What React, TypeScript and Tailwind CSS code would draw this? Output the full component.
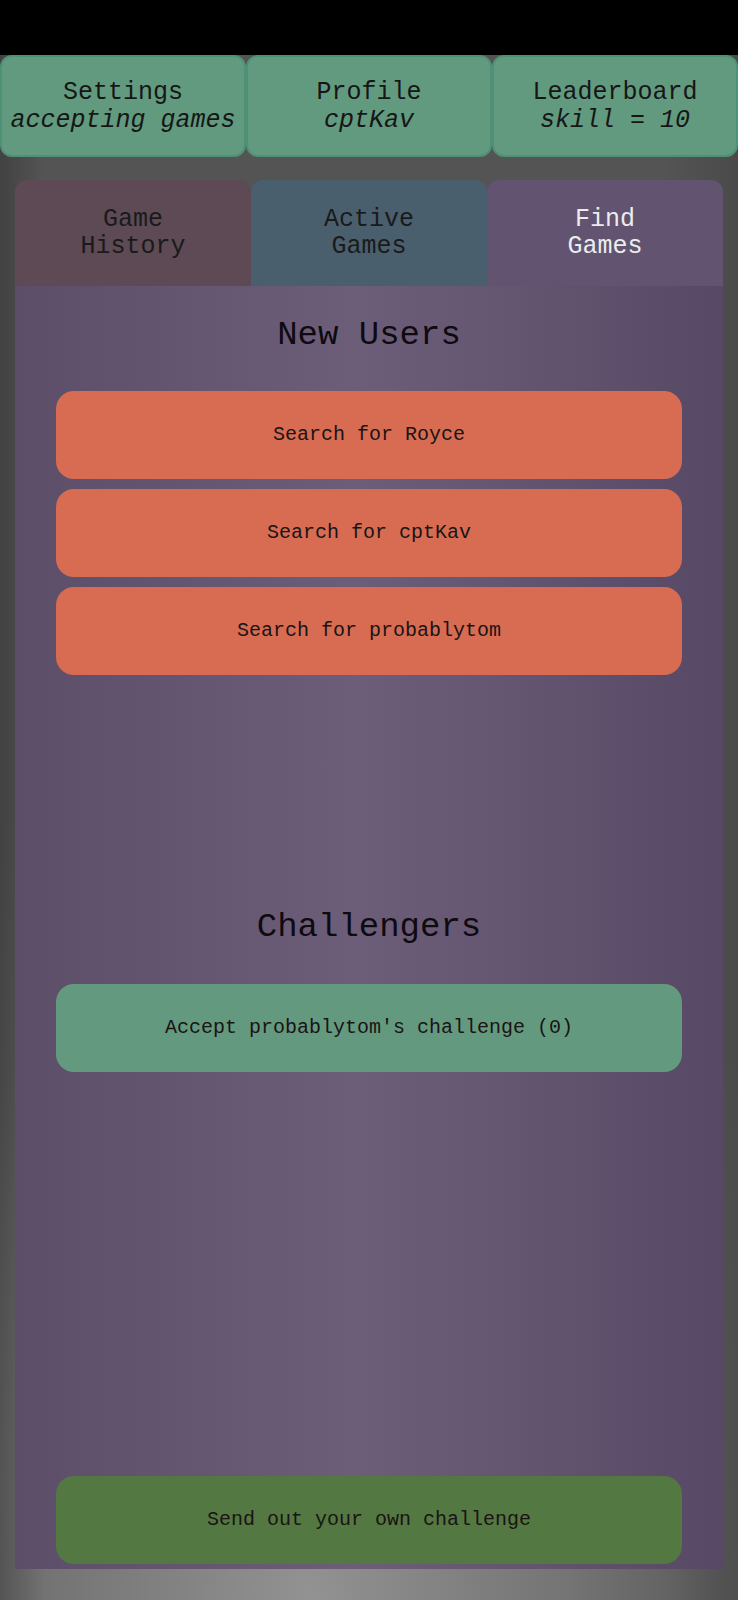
import React from "react";

const font = { fontFamily: '"Liberation Mono", "DejaVu Sans Mono", monospace' };

function TopButton({ title, sub }: { title: string; sub: string }) {
  return (
    <div className="flex flex-col items-center justify-center rounded-[12px] border-2 border-[#4f9177] bg-[#629a80] pt-[2px] text-[25px] leading-[28px] text-[#161616]">
      <span>{title}</span>
      <span className="italic">{sub}</span>
    </div>
  );
}

function Btn({ label, color }: { label: string; color: string }) {
  return (
    <div
      className={`flex h-[88px] items-center justify-center rounded-[18px] text-[20px] text-[#1a1414] ${color}`}
    >
      {label}
    </div>
  );
}

export default function App() {
  return (
    <div
      style={font}
      className="flex h-[1600px] w-full flex-col bg-[linear-gradient(to_right,rgba(0,0,0,0.22)_0%,rgba(0,0,0,0)_6%,rgba(0,0,0,0)_90%,rgba(0,0,0,0.12)_100%),radial-gradient(ellipse_70%_60%_at_42%_100%,#929292_0%,#747474_50%,#5a5a5a_80%,#545454_100%)]"
    >
      <div className="h-[55px] bg-black" />
      <div className="grid h-[102px] grid-cols-3">
        <TopButton title="Settings" sub="accepting games" />
        <TopButton title="Profile" sub="cptKav" />
        <TopButton title="Leaderboard" sub="skill = 10" />
      </div>
      <div className="px-[15px] pt-[23px]">
        <div className="grid h-[106px] grid-cols-3 text-[25px] leading-[27px]">
          <div className="flex flex-col items-center rounded-t-[12px] bg-[#5d4a55] pt-[26px] text-[#1a1a1a]">
            <span>Game</span>
            <span>History</span>
          </div>
          <div className="flex flex-col items-center rounded-t-[12px] bg-[#4a5f6e] pt-[26px] text-[#1a1a1a]">
            <span>Active</span>
            <span>Games</span>
          </div>
          <div className="flex flex-col items-center rounded-t-[12px] bg-[#625470] pt-[26px] text-[#ececec]">
            <span>Find</span>
            <span>Games</span>
          </div>
        </div>
        <div className="flex h-[1283px] flex-col bg-[linear-gradient(to_right,#5c4e68_0%,#665873_30%,#6c5e78_48%,#645671_70%,#574865_100%)] px-[41px] pt-[29px]">
          <h2 className="text-center text-[34px] leading-[40px] text-[#0e0a10]">New Users</h2>
          <div className="mt-[36px] flex flex-col gap-[10px]">
            <Btn label="Search for Royce" color="bg-[#d76c52]" />
            <Btn label="Search for cptKav" color="bg-[#d76c52]" />
            <Btn label="Search for probablytom" color="bg-[#d76c52]" />
          </div>
          <h2 className="mt-[232px] text-center text-[34px] leading-[40px] text-[#0e0a10]">Challengers</h2>
          <div className="mt-[37px]">
            <Btn label="Accept probablytom's challenge (0)" color="bg-[#639a7f]" />
          </div>
          <div className="mt-auto pb-[5px]">
            <Btn label="Send out your own challenge" color="bg-[#547841]" />
          </div>
        </div>
      </div>
    </div>
  );
}
